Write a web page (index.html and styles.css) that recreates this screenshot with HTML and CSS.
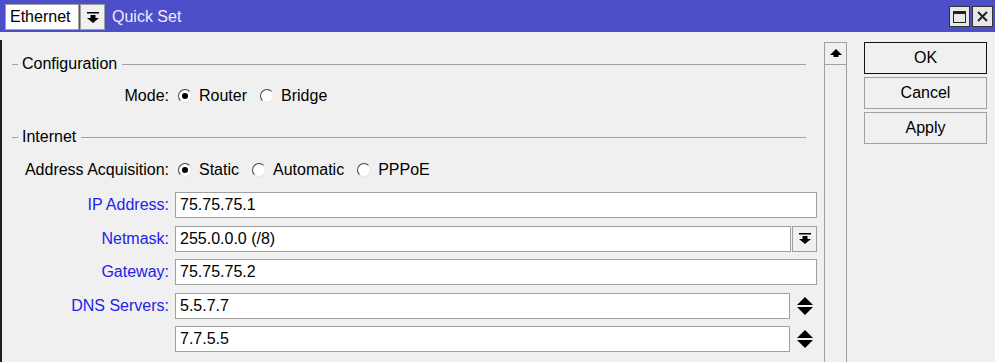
FILE: index.html
```html
<!DOCTYPE html>
<html lang="en">
<head>
    <meta charset="UTF-8">
    <meta name="viewport" content="width=device-width, initial-scale=1.0">
    <title>Quick Set</title>
    <link rel="stylesheet" href="styles.css">
</head>
<body>
    <div class="window">
        <div class="titlebar">
            <div class="iface-select">
                <span class="iface-value">Ethernet</span>
                <span class="drop-btn">
                    <svg width="12" height="11" viewBox="0 0 12 11"><rect x="0" y="0" width="12" height="1.5"/><rect x="3.5" y="3" width="5" height="3.5"/><polygon points="0,6 12,6 6,11"/></svg>
                </span>
            </div>
            <span class="title">Quick Set</span>
            <div class="win-controls">
                <span class="win-btn">
                    <svg width="13" height="12" viewBox="0 0 13 12"><rect x="0.5" y="0.5" width="12" height="11" fill="none" stroke="#222"/><rect x="0" y="0" width="13" height="3" fill="#222"/></svg>
                </span>
                <span class="win-btn">
                    <svg width="11" height="11" viewBox="0 0 11 11"><path d="M1 1 L10 10 M10 1 L1 10" stroke="#222" stroke-width="2"/></svg>
                </span>
            </div>
        </div>

        <div class="content">
            <div class="form-panel">
                <div class="group-title first">Configuration</div>
                <div class="form-row option-row">
                    <label class="row-label">Mode:</label>
                    <div class="options">
                        <span class="option"><span class="radio checked"></span>Router</span>
                        <span class="option"><span class="radio"></span>Bridge</span>
                    </div>
                </div>

                <div class="group-title">Internet</div>
                <div class="form-row option-row acq-row">
                    <label class="row-label">Address Acquisition:</label>
                    <div class="options">
                        <span class="option"><span class="radio checked"></span>Static</span>
                        <span class="option"><span class="radio"></span>Automatic</span>
                        <span class="option"><span class="radio"></span>PPPoE</span>
                    </div>
                </div>

                <div class="fields">
                    <div class="form-row">
                        <label class="row-label link">IP Address:</label>
                        <div class="field"><div class="input">75.75.75.1</div></div>
                    </div>
                    <div class="form-row">
                        <label class="row-label link">Netmask:</label>
                        <div class="field">
                            <div class="input">255.0.0.0 (/8)</div>
                            <span class="combo-btn">
                                <svg width="12" height="11" viewBox="0 0 12 11"><rect x="0" y="0" width="12" height="1.5"/><rect x="3.5" y="3" width="5" height="3.5"/><polygon points="0,6 12,6 6,11"/></svg>
                            </span>
                        </div>
                    </div>
                    <div class="form-row">
                        <label class="row-label link">Gateway:</label>
                        <div class="field"><div class="input">75.75.75.2</div></div>
                    </div>
                    <div class="form-row">
                        <label class="row-label link">DNS Servers:</label>
                        <div class="field">
                            <div class="input">5.5.7.7</div>
                            <span class="spinner">
                                <svg width="16" height="18" viewBox="0 0 16 18"><polygon points="0,8 8,0 16,8"/><polygon points="0,10 16,10 8,18"/></svg>
                            </span>
                        </div>
                    </div>
                    <div class="form-row">
                        <label class="row-label"></label>
                        <div class="field">
                            <div class="input">7.7.5.5</div>
                            <span class="spinner">
                                <svg width="16" height="18" viewBox="0 0 16 18"><polygon points="0,8 8,0 16,8"/><polygon points="0,10 16,10 8,18"/></svg>
                            </span>
                        </div>
                    </div>
                </div>
            </div>

            <div class="scrollbar">
                <div class="scroll-up">
                    <svg width="12" height="9" viewBox="0 0 12 9"><polygon points="0,6 6,0 12,6"/><rect x="3.5" y="5" width="5" height="3"/></svg>
                </div>
                <div class="scroll-track"></div>
            </div>

            <div class="actions">
                <button class="btn default">OK</button>
                <button class="btn">Cancel</button>
                <button class="btn">Apply</button>
            </div>
        </div>
    </div>
</body>
</html>
```

FILE: styles.css
```css
body {
    margin: 0;
    font-family: "Liberation Sans", Arial, sans-serif;
    font-size: 16px;
    color: #000;
    background-color: #f0f0f0;
}
.window {
    width: 995px;
    height: 362px;
    display: flex;
    flex-direction: column;
    overflow: hidden;
}
.titlebar {
    height: 32px;
    background-color: #4c4fc8;
    display: flex;
    align-items: flex-start;
    box-sizing: border-box;
    padding: 4px 2px 0 5px;
}
.iface-select {
    display: flex;
    gap: 1px;
}
.iface-value {
    width: 74px;
    height: 26px;
    box-sizing: border-box;
    background: white;
    border: 1px solid #a0a0a0;
    padding-left: 4px;
    line-height: 24px;
}
.drop-btn {
    width: 25px;
    height: 26px;
    box-sizing: border-box;
    background: #f0f0f0;
    border: 1px solid #a0a0a0;
    display: flex;
    align-items: center;
    justify-content: center;
}
.title {
    color: #ececff;
    margin-left: 7px;
    line-height: 26px;
}
.win-controls {
    margin-left: auto;
    margin-top: 2px;
    display: flex;
    gap: 2px;
}
.win-btn {
    width: 21px;
    height: 21px;
    box-sizing: border-box;
    background: #e8e8e8;
    border: 1px solid #333;
    display: flex;
    align-items: center;
    justify-content: center;
}
.content {
    flex: 1;
    display: flex;
    align-items: stretch;
    padding-top: 10px;
}
.form-panel {
    flex: 1;
    margin-top: -2px;
    border-left: 2px solid #1e1e1e;
    padding-right: 1px;
    padding-top: 12px;
}
.group-title {
    display: flex;
    align-items: center;
    height: 24px;
    margin: 13px 11px 5px 10px;
}
.group-title.first {
    margin-top: 0;
    margin-bottom: 4px;
}
.group-title::before {
    content: "";
    width: 6px;
    height: 1px;
    background: #a0a0a0;
    margin-right: 4px;
}
.group-title::after {
    content: "";
    flex: 1;
    height: 1px;
    background: #a0a0a0;
    margin-left: 5px;
}
.form-row {
    display: flex;
    align-items: center;
}
.option-row {
    height: 32px;
}
.row-label {
    width: 167px;
    flex: none;
    text-align: right;
    margin-right: 6px;
}
.row-label.link {
    color: #2222e8;
}
.options {
    display: flex;
    align-items: center;
    padding-left: 3px;
}
.option {
    display: flex;
    align-items: center;
    margin-right: 13px;
}
.radio {
    width: 14px;
    height: 14px;
    box-sizing: border-box;
    border-radius: 50%;
    background: white;
    border: 1px solid;
    border-color: #444 #e4e4e4 #e4e4e4 #444;
    margin-right: 7px;
    position: relative;
}
.radio.checked::after {
    content: "";
    position: absolute;
    left: 3px;
    top: 3px;
    width: 6px;
    height: 6px;
    border-radius: 50%;
    background: #000;
}
.fields {
    margin-top: 6px;
    display: flex;
    flex-direction: column;
    gap: 7.5px;
}
.field {
    flex: 1;
    display: flex;
    gap: 1px;
    height: 26px;
}
.input {
    flex: 1;
    box-sizing: border-box;
    background: white;
    border: 1px solid #a0a0a0;
    padding-left: 4px;
    line-height: 24px;
}
.combo-btn {
    width: 25px;
    box-sizing: border-box;
    background: #f0f0f0;
    border: 1px solid #a0a0a0;
    display: flex;
    align-items: center;
    justify-content: center;
}
.spinner {
    width: 26px;
    padding-left: 6px;
    box-sizing: border-box;
    display: flex;
    align-items: center;
}
.scrollbar {
    width: 23px;
    margin-left: 6px;
    display: flex;
    flex-direction: column;
}
.scroll-up {
    height: 23px;
    box-sizing: border-box;
    border: 1px solid #a0a0a0;
    display: flex;
    align-items: center;
    justify-content: center;
}
.scroll-track {
    flex: 1;
    border-left: 1px solid #a0a0a0;
    border-right: 1px solid #a0a0a0;
}
.actions {
    width: 123px;
    margin: 0 8px 0 17px;
    display: flex;
    flex-direction: column;
    gap: 3px;
}
.btn {
    height: 32px;
    background-color: #f0f0f0;
    border: 1px solid #a0a0a0;
    font-family: inherit;
    font-size: 16px;
    color: #000;
    padding: 0;
}
.btn.default {
    border-color: #111;
}
```
